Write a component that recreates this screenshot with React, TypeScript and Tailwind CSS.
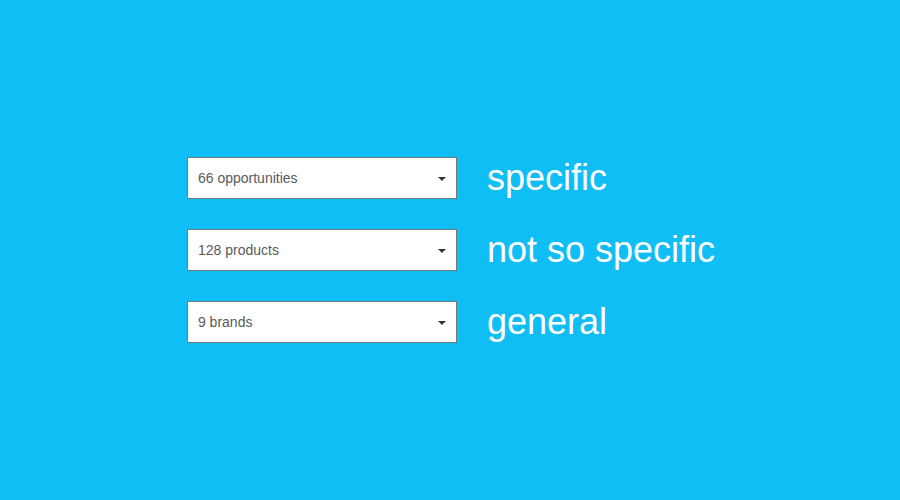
import React from 'react';

const rows = [
  { value: '66 opportunities', label: 'specific' },
  { value: '128 products', label: 'not so specific' },
  { value: '9 brands', label: 'general' },
];

function Dropdown({ value }: { value: string }) {
  return (
    <div className="flex h-[42px] w-[270px] items-center justify-between border border-[#777777] bg-white pl-[10px] pr-[10px]">
      <span className="text-[14px] text-[#5a5a5a]">{value}</span>
      <svg width="8" height="4" viewBox="0 0 8 4" className="mt-[1px]">
        <path d="M0 0H8L4 4Z" fill="#333333" />
      </svg>
    </div>
  );
}

export default function App() {
  return (
    <div
      className="flex h-[500px] w-[900px] items-center justify-center bg-[#0ebef4]"
      style={{ fontFamily: '"Liberation Sans", Arial, sans-serif' }}
    >
      <div className="grid grid-cols-[270px_auto] items-center gap-x-[30px] gap-y-[30px] pl-[2px]">
        {rows.map((r) => (
          <React.Fragment key={r.label}>
            <Dropdown value={r.value} />
            <span className="text-[36px] leading-none text-white">{r.label}</span>
          </React.Fragment>
        ))}
      </div>
    </div>
  );
}
